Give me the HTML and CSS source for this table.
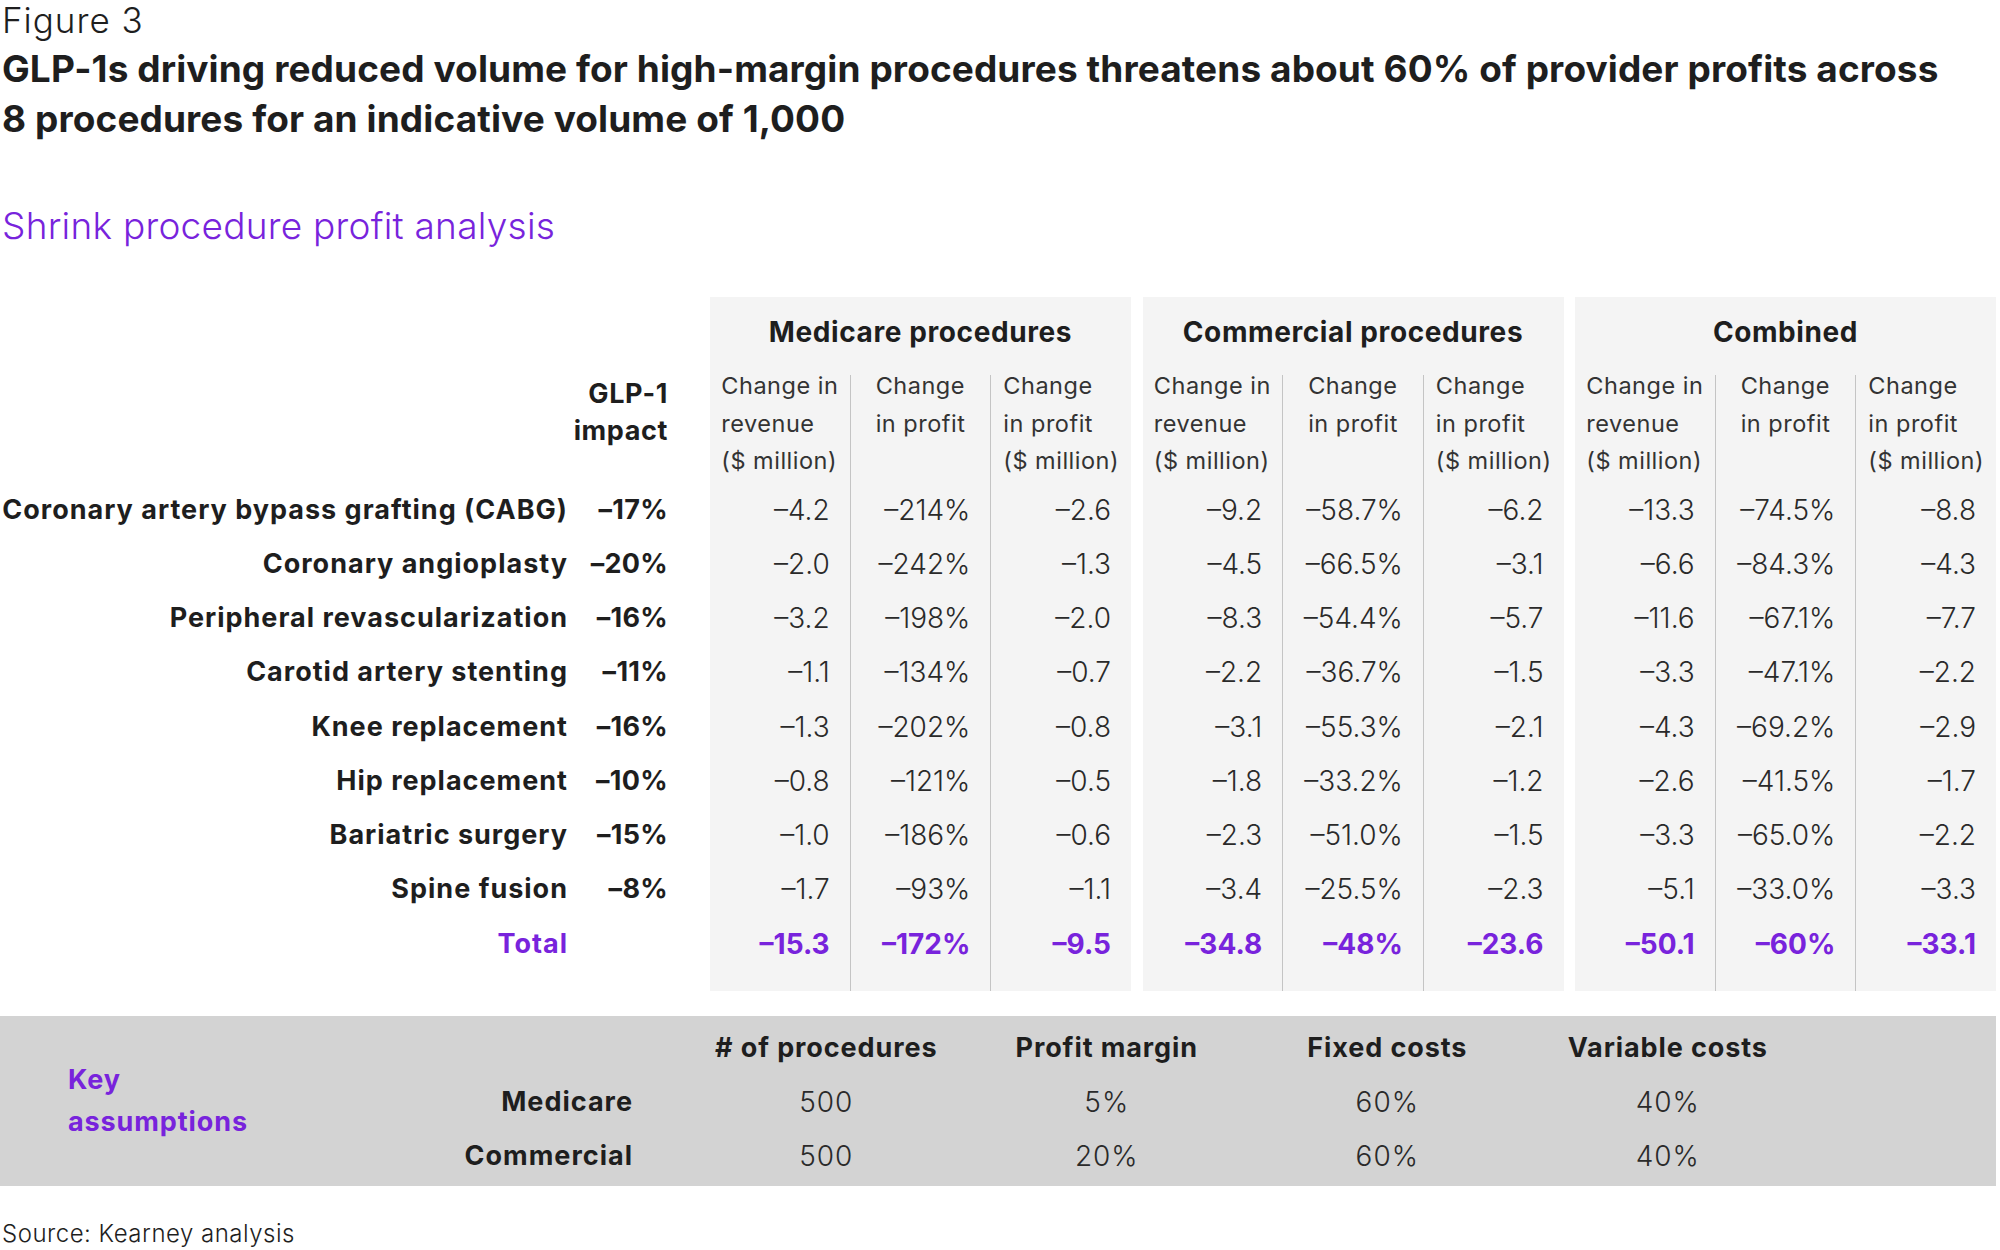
FILE: index.html
```html
<!DOCTYPE html>
<html lang="en">
<head>
<meta charset="utf-8">
<title>Figure 3</title>
<link rel="stylesheet" href="styles.css">
</head>
<body>
<div class="page">
  <div class="fig">Figure 3</div>
  <h1 class="title">GLP-1s driving reduced volume for high-margin procedures threatens about 60% of provider profits across<br>8 procedures for an indicative volume of 1,000</h1>
  <h2 class="subtitle">Shrink procedure profit analysis</h2>

  <div class="table">
    <div class="left">
      <div class="left-head"><span>GLP-1<br>impact</span></div>
      <div class="lrow"><span class="lab">Coronary artery bypass grafting (CABG)</span><span class="imp">–17%</span></div>
      <div class="lrow"><span class="lab">Coronary angioplasty</span><span class="imp">–20%</span></div>
      <div class="lrow"><span class="lab">Peripheral revascularization</span><span class="imp">–16%</span></div>
      <div class="lrow"><span class="lab">Carotid artery stenting</span><span class="imp">–11%</span></div>
      <div class="lrow"><span class="lab">Knee replacement</span><span class="imp">–16%</span></div>
      <div class="lrow"><span class="lab">Hip replacement</span><span class="imp">–10%</span></div>
      <div class="lrow"><span class="lab">Bariatric surgery</span><span class="imp">–15%</span></div>
      <div class="lrow"><span class="lab">Spine fusion</span><span class="imp">–8%</span></div>
      <div class="lrow total"><span class="lab">Total</span><span class="imp"></span></div>
    </div>

    <div class="panel">
      <div class="panel-title">Medicare procedures</div>
      <div class="cols">
        <div class="col">
          <div class="colhead"><span>Change in<br>revenue<br>($ million)</span></div>
          <div class="cell">–4.2</div><div class="cell">–2.0</div><div class="cell">–3.2</div><div class="cell">–1.1</div><div class="cell">–1.3</div><div class="cell">–0.8</div><div class="cell">–1.0</div><div class="cell">–1.7</div><div class="cell total">–15.3</div>
        </div>
        <div class="col">
          <div class="colhead"><span>Change<br>in profit<br>&nbsp;</span></div>
          <div class="cell">–214%</div><div class="cell">–242%</div><div class="cell">–198%</div><div class="cell">–134%</div><div class="cell">–202%</div><div class="cell">–121%</div><div class="cell">–186%</div><div class="cell">–93%</div><div class="cell total">–172%</div>
        </div>
        <div class="col">
          <div class="colhead"><span>Change<br>in profit<br>($ million)</span></div>
          <div class="cell">–2.6</div><div class="cell">–1.3</div><div class="cell">–2.0</div><div class="cell">–0.7</div><div class="cell">–0.8</div><div class="cell">–0.5</div><div class="cell">–0.6</div><div class="cell">–1.1</div><div class="cell total">–9.5</div>
        </div>
      </div>
    </div>

    <div class="panel">
      <div class="panel-title">Commercial procedures</div>
      <div class="cols">
        <div class="col">
          <div class="colhead"><span>Change in<br>revenue<br>($ million)</span></div>
          <div class="cell">–9.2</div><div class="cell">–4.5</div><div class="cell">–8.3</div><div class="cell">–2.2</div><div class="cell">–3.1</div><div class="cell">–1.8</div><div class="cell">–2.3</div><div class="cell">–3.4</div><div class="cell total">–34.8</div>
        </div>
        <div class="col">
          <div class="colhead"><span>Change<br>in profit<br>&nbsp;</span></div>
          <div class="cell">–58.7%</div><div class="cell">–66.5%</div><div class="cell">–54.4%</div><div class="cell">–36.7%</div><div class="cell">–55.3%</div><div class="cell">–33.2%</div><div class="cell">–51.0%</div><div class="cell">–25.5%</div><div class="cell total">–48%</div>
        </div>
        <div class="col">
          <div class="colhead"><span>Change<br>in profit<br>($ million)</span></div>
          <div class="cell">–6.2</div><div class="cell">–3.1</div><div class="cell">–5.7</div><div class="cell">–1.5</div><div class="cell">–2.1</div><div class="cell">–1.2</div><div class="cell">–1.5</div><div class="cell">–2.3</div><div class="cell total">–23.6</div>
        </div>
      </div>
    </div>

    <div class="panel">
      <div class="panel-title">Combined</div>
      <div class="cols">
        <div class="col">
          <div class="colhead"><span>Change in<br>revenue<br>($ million)</span></div>
          <div class="cell">–13.3</div><div class="cell">–6.6</div><div class="cell">–11.6</div><div class="cell">–3.3</div><div class="cell">–4.3</div><div class="cell">–2.6</div><div class="cell">–3.3</div><div class="cell">–5.1</div><div class="cell total">–50.1</div>
        </div>
        <div class="col">
          <div class="colhead"><span>Change<br>in profit<br>&nbsp;</span></div>
          <div class="cell">–74.5%</div><div class="cell">–84.3%</div><div class="cell">–67.1%</div><div class="cell">–47.1%</div><div class="cell">–69.2%</div><div class="cell">–41.5%</div><div class="cell">–65.0%</div><div class="cell">–33.0%</div><div class="cell total">–60%</div>
        </div>
        <div class="col">
          <div class="colhead"><span>Change<br>in profit<br>($ million)</span></div>
          <div class="cell">–8.8</div><div class="cell">–4.3</div><div class="cell">–7.7</div><div class="cell">–2.2</div><div class="cell">–2.9</div><div class="cell">–1.7</div><div class="cell">–2.2</div><div class="cell">–3.3</div><div class="cell total">–33.1</div>
        </div>
      </div>
    </div>
  </div>

  <div class="keybox">
    <div class="key-label">Key<br>assumptions</div>
    <div class="key-grid">
      <div class="kl"></div><div class="kh">#&nbsp;of procedures</div><div class="kh">Profit margin</div><div class="kh">Fixed costs</div><div class="kh">Variable costs</div>
      <div class="kl">Medicare</div><div class="kv">500</div><div class="kv">5%</div><div class="kv">60%</div><div class="kv">40%</div>
      <div class="kl">Commercial</div><div class="kv">500</div><div class="kv">20%</div><div class="kv">60%</div><div class="kv">40%</div>
    </div>
  </div>

  <div class="source">Source: Kearney analysis</div>
</div>
</body>
</html>
```

FILE: styles.css
```css
* { box-sizing: border-box; }

html, body {
  margin: 0;
  padding: 0;
  background: #ffffff;
}

body {
  font-family: "Inter", "Liberation Sans", sans-serif;
  color: #1e1e1e;
}

.page {
  width: 1996px;
}

.fig {
  padding-left: 2px;
  font-size: 35px;
  font-weight: 300;
  letter-spacing: 1px;
  line-height: 40px;
  height: 40px;
}

.title {
  margin: 4px 0 0 0;
  padding-left: 2px;
  font-size: 37px;
  font-weight: 700;
  line-height: 50px;
  letter-spacing: 0.1px;
  white-space: nowrap;
}

.subtitle {
  margin: 60px 0 0 0;
  padding-left: 2px;
  font-size: 37px;
  font-weight: 300;
  letter-spacing: 0.25px;
  line-height: 44px;
  color: #7823dc;
}

.table {
  margin-top: 49px;
  display: flex;
}

.left {
  width: 710px;
  flex: none;
  padding-right: 42px;
}

.left-head {
  height: 185.7px;
  padding-top: 77.6px;
  text-align: right;
  font-size: 27px;
  font-weight: 700;
  letter-spacing: 0.6px;
  line-height: 37.33px;
}

.lrow {
  display: flex;
  height: 54.25px;
  line-height: 54.25px;
  font-size: 27px;
  font-weight: 700;
  white-space: nowrap;
}

.lab {
  width: 568px;
  text-align: right;
  letter-spacing: 1px;
}

.imp {
  width: 100px;
  text-align: right;
  letter-spacing: 0.3px;
}

.lrow.total { color: #7823dc; }

.panel {
  width: 421px;
  flex: none;
  background: #f4f4f4;
}

.panel + .panel {
  margin-left: 11.5px;
}

.panel-title {
  height: 78px;
  padding-top: 14.5px;
  text-align: center;
  font-size: 28px;
  font-weight: 700;
  letter-spacing: 0.6px;
  line-height: 40px;
}

.cols {
  display: flex;
}

.col {
  flex: 1 1 0;
  min-width: 0;
  padding-bottom: 20px;
}

.col + .col {
  border-left: 1px solid #c4c4c4;
}

.colhead {
  display: flex;
  justify-content: center;
  margin-top: -7.7px;
  margin-bottom: 3.4px;
  height: 112px;
  font-size: 23.5px;
  font-weight: 400;
  letter-spacing: 0.5px;
  line-height: 37.33px;
  color: #333333;
  white-space: nowrap;
}

.colhead span { text-align: left; }

.cell {
  height: 54.25px;
  line-height: 54.25px;
  padding-right: 20px;
  text-align: right;
  font-size: 28px;
  font-weight: 300;
  color: #2a2a2a;
  white-space: nowrap;
}

.cell.total {
  color: #7823dc;
  font-weight: 700;
}

.keybox {
  margin-top: 25px;
  height: 170px;
  background: #d3d3d3;
  display: flex;
  align-items: center;
}

.key-label {
  width: 300px;
  flex: none;
  padding-left: 68px;
  font-size: 27px;
  font-weight: 700;
  letter-spacing: 0.9px;
  line-height: 42px;
  color: #7823dc;
}

.key-grid {
  display: grid;
  grid-template-columns: 386px repeat(4, 280.5px);
  grid-auto-rows: 54px;
  padding-top: 3px;
  line-height: 54px;
  white-space: nowrap;
}

.kl {
  padding-right: 53px;
  text-align: right;
  font-size: 27px;
  font-weight: 700;
  letter-spacing: 1px;
}

.kh {
  text-align: center;
  font-size: 27px;
  font-weight: 700;
  letter-spacing: 0.9px;
}

.kv {
  text-align: center;
  font-size: 28px;
  font-weight: 300;
  letter-spacing: 1px;
  color: #2a2a2a;
}

.source {
  margin-top: 32.7px;
  padding-left: 2px;
  font-size: 24px;
  font-weight: 300;
  letter-spacing: 0.5px;
  line-height: 30px;
}
```
